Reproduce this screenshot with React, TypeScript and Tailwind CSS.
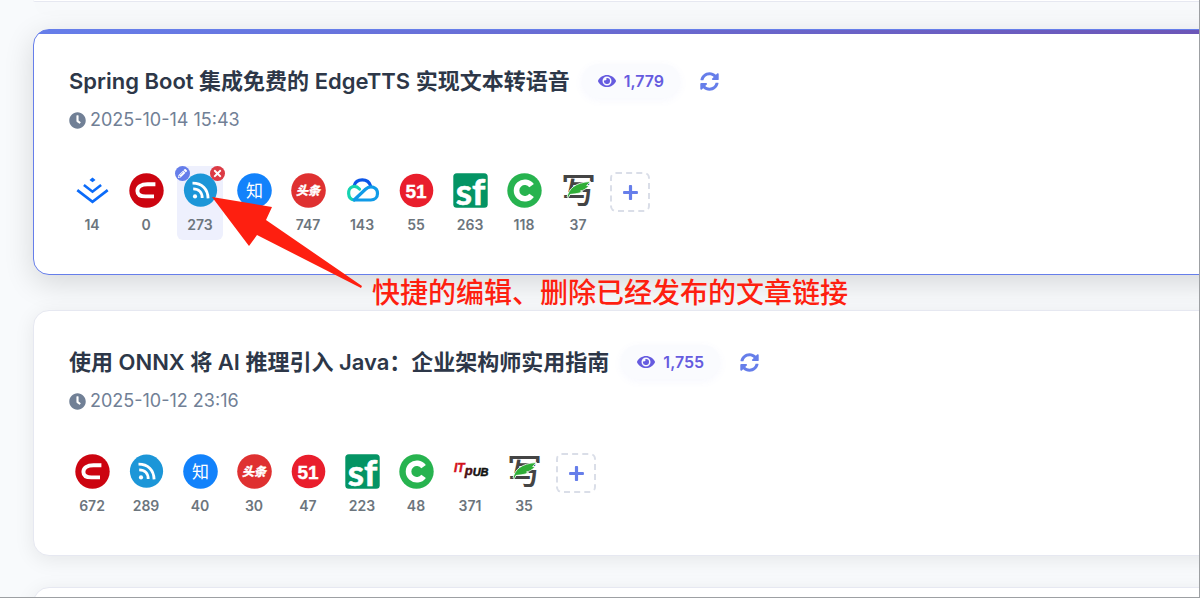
import { FaClock, FaEye, FaPencilAlt, FaPlus, FaSyncAlt, FaTimes } from "react-icons/fa";

type PlatformName =
  | "juejin"
  | "csdn"
  | "cnblogs"
  | "zhihu"
  | "toutiao"
  | "tencent"
  | "cto51"
  | "segmentfault"
  | "oschina"
  | "itpub"
  | "jianshu";

type Channel = { platform: PlatformName; reads: number; active?: boolean };

type Article = {
  title: string;
  date: string;
  total: string;
  channels: Channel[];
  active?: boolean;
};

const articles: Article[] = [
  {
    title: "Spring Boot 集成免费的 EdgeTTS 实现文本转语音",
    date: "2025-10-14 15:43",
    total: "1,779",
    active: true,
    channels: [
      { platform: "juejin", reads: 14 },
      { platform: "csdn", reads: 0 },
      { platform: "cnblogs", reads: 273, active: true },
      { platform: "zhihu", reads: 40 },
      { platform: "toutiao", reads: 747 },
      { platform: "tencent", reads: 143 },
      { platform: "cto51", reads: 55 },
      { platform: "segmentfault", reads: 263 },
      { platform: "oschina", reads: 118 },
      { platform: "jianshu", reads: 37 },
    ],
  },
  {
    title: "使用 ONNX 将 AI 推理引入 Java：企业架构师实用指南",
    date: "2025-10-12 23:16",
    total: "1,755",
    channels: [
      { platform: "csdn", reads: 672 },
      { platform: "cnblogs", reads: 289 },
      { platform: "zhihu", reads: 40 },
      { platform: "toutiao", reads: 30 },
      { platform: "cto51", reads: 47 },
      { platform: "segmentfault", reads: 223 },
      { platform: "oschina", reads: 48 },
      { platform: "itpub", reads: 371 },
      { platform: "jianshu", reads: 35 },
    ],
  },
];

const logos = {
  juejin: (
    <g fill="none" stroke="#0b6bf9" strokeWidth="2.6">
      <path d="M17.5 4.5l3 2.4-3 2.4-3-2.4z" fill="#0b6bf9" stroke="none" />
      <path d="M8.9 11.9l8.6 6.8 8.6-6.8" />
      <path d="M2.3 17.1l15.2 11.8 15.2-11.8" />
    </g>
  ),
  csdn: (
    <>
      <circle cx="17.5" cy="17.5" r="17.2" fill="#cc0410" />
      <path
        d="M26.4 11.2H18.5C12 11.2 8.4 14.2 8.4 18C8.4 21.8 11.500 23.400 16.500 23.400H25"
        fill="none"
        stroke="#fff"
        strokeWidth="3.9"
      />
    </>
  ),
  cnblogs: (
    <>
      <circle cx="17.5" cy="17.2" r="16.6" fill="#1c96d8" />
      <circle cx="12" cy="23.4" r="2.1" fill="#fff" />
      <g fill="none" stroke="#fff" strokeWidth="2.8">
        <path d="M10.2 15.8c5.4 0 9 3.5 9 9.2" />
        <path d="M9.5 10.2c9.5 0 15.3 5.8 15.6 15.2" />
      </g>
    </>
  ),
  zhihu: (
    <>
      <circle cx="17.5" cy="17.5" r="17.3" fill="#1282fb" />
      <text x="17.5" y="24" fontSize="17" fill="#fff" textAnchor="middle">
        知
      </text>
    </>
  ),
  toutiao: (
    <>
      <circle cx="17.5" cy="17.5" r="17.3" fill="#df3131" />
      <text
        x="17"
        y="21.5"
        fontSize="12"
        fontWeight="900"
        fontStyle="italic"
        fill="#fff"
        stroke="#fff"
        strokeWidth="0.3"
        textAnchor="middle"
      >
        头条
      </text>
    </>
  ),
  tencent: (
    <g fill="none" strokeWidth="3.2" strokeLinecap="round">
      <path d="M9.2 12.6C10.2 8.8 13.6 6.9 17.3 6.9c4 0 7.2 2.4 8.3 6" stroke="#0b55e8" />
      <path d="M14.5 16C12.5 13.9 10 13 7.5 13.7c-5.3 1.5-5.5 12.5 1.6 13.3" stroke="#15d3b1" />
      <path
        d="M9.1 27h16.7c3.9 0 6.7-2.8 6.7-6.5 0-6.4-7.2-8.7-12-4.3L9.1 27"
        stroke="#109be8"
        strokeLinejoin="round"
      />
    </g>
  ),
  cto51: (
    <>
      <circle cx="17.5" cy="17.5" r="16.8" fill="#e91e2c" />
      <text
        x="17"
        y="24.5"
        fontSize="19"
        fontWeight="700"
        fill="#fff"
        stroke="#fff"
        strokeWidth="0.4"
        textAnchor="middle"
        className="font-['Liberation_Sans',sans-serif]"
      >
        51
      </text>
    </>
  ),
  segmentfault: (
    <>
      <rect x="0.3" y="0.3" width="34.4" height="34.4" rx="3.5" fill="#049464" />
      <text
        x="17.5"
        y="31.5"
        fontSize="37"
        fontWeight="700"
        fill="#fff"
        stroke="#fff"
        strokeWidth="0.6"
        textAnchor="middle"
        className="font-['Lato',sans-serif]"
      >
        sf
      </text>
    </>
  ),
  oschina: (
    <>
      <circle cx="17.5" cy="17.5" r="17.2" fill="#27b34f" />
      <path d="M24.6 12.7a8.3 8.3 0 1 0 0 9.6" fill="none" stroke="#fff" strokeWidth="5.6" />
    </>
  ),
  itpub: (
    <text
      x="1"
      y="17.5"
      fontSize="12"
      fontWeight="700"
      fontStyle="italic"
      fill="#d4111b"
      stroke="#d4111b"
      strokeWidth="0.5"
      className="font-['Liberation_Sans',sans-serif]"
    >
      IT
      <tspan dy="3" fontSize="13" fill="#4a1014" stroke="#4a1014">
        p
      </tspan>
      <tspan dy="1" fontSize="11" fill="#111" stroke="#111">
        UB
      </tspan>
    </text>
  ),
  jianshu: (
    <>
      <text x="17.5" y="30" fontSize="35" fontWeight="500" fill="#444" textAnchor="middle">
        写
      </text>
      <path
        d="M6 24C8 15.500 14 9.500 29.500 8.500l-3.800 4 2.400.2c-3.200 3.600-6 4.800-8.600 5.300l2 .5c-4 2.700-9.500 2.300-12.500 3L7.500 24.500z"
        fill="#2fae37"
        stroke="#fff"
        strokeWidth="0.8"
      />
    </>
  ),
};

const Logo = ({ name }: { name: PlatformName }) => (
  <svg viewBox="0 0 35 35" className="h-[35px] w-[35px] overflow-visible" aria-hidden="true">
    {logos[name]}
  </svg>
);

const ChannelItem = ({ channel }: { channel: Channel }) => (
  <div className={channel.active ? "relative rounded-md bg-[#eef0fd]" : "relative rounded-md"}>
    <a
      href={`#${channel.platform}`}
      aria-label={channel.platform}
      className="flex w-[46px] flex-col items-center gap-2 pt-[7px] pb-[6px]"
    >
      <Logo name={channel.platform} />
      <span className="text-sm leading-[18px] font-semibold text-[#6c757d]">{channel.reads}</span>
    </a>
    {channel.active && (
      <>
        <button
          aria-label="编辑"
          className="absolute top-0 -left-0.5 flex h-[15px] w-[15px] items-center justify-center rounded-full bg-[#667eea] text-[9px] text-white"
        >
          <FaPencilAlt />
        </button>
        <button
          aria-label="删除"
          className="absolute top-0 -right-0.5 flex h-[15px] w-[15px] items-center justify-center rounded-full bg-[#dc3b45] text-[11px] text-white"
        >
          <FaTimes />
        </button>
      </>
    )}
  </div>
);

const Annotation = () => (
  <div className="pointer-events-none absolute top-[167px] left-[178px] flex items-end text-[#fe1f10]">
    <svg width="152" height="92" viewBox="0 0 152 92" fill="currentColor" aria-hidden="true">
      <path d="M0 0L60 10L54 23L150 89L149 91L45 38L37 49z" />
    </svg>
    <p className="-mb-[22px] ml-2 text-[28px] leading-9 font-medium whitespace-nowrap">
      快捷的编辑、删除已经发布的文章链接
    </p>
  </div>
);

const ArticleCard = ({ article }: { article: Article }) => (
  <article
    className={
      article.active
        ? "relative z-10 -translate-y-1 rounded-2xl border border-[#667eea] bg-white bg-[linear-gradient(90deg,#667eea,#6c55b6)] bg-[length:100%_4px] bg-no-repeat py-[34px] pl-[35px] shadow-[0_8px_30px_rgba(0,0,0,0.14)]"
        : "relative rounded-2xl border border-[#e6e8f1] bg-white py-[34px] pl-[35px] shadow-[0_4px_20px_rgba(0,0,0,0.08)]"
    }
  >
    <div className="flex items-center">
      <h2 className="text-[22px] leading-8 font-semibold whitespace-nowrap text-[#2d3748]">{article.title}</h2>
      <span className="ml-3 flex h-[34px] items-center gap-2 rounded-full bg-[#fafbfe] px-4 text-base font-semibold text-[#665bdf] shadow-[0_2px_8px_rgba(102,126,234,0.06)]">
        <FaEye className="text-lg" />
        {article.total}
      </span>
      <button aria-label="刷新" className="ml-5 text-[19px] text-[#667eea]">
        <FaSyncAlt />
      </button>
    </div>
    <div className="mt-2.5 flex items-center gap-1 text-lg leading-6 text-[#718096]">
      <FaClock className="text-[17px]" />
      <time>{article.date}</time>
    </div>
    <div className="mt-[34px] flex items-start gap-2">
      {article.channels.map((channel) => (
        <ChannelItem key={channel.platform} channel={channel} />
      ))}
      <button
        aria-label="添加链接"
        className="mt-1.5 ml-px flex h-10 w-10 items-center justify-center rounded-md border-2 border-dashed border-[#dadee8] text-[17px] text-[#667eea]"
      >
        <FaPlus />
      </button>
    </div>
    {article.active && <Annotation />}
  </article>
);

export default function App() {
  return (
    <main className="h-screen overflow-hidden border-r border-b border-[#9da0a3] bg-[#f8fafc] font-['Inter','Noto_Sans_CJK_SC',sans-serif]">
      <div className="-mr-9 flex flex-col gap-[31px] pl-[33px]">
        <div className="h-0.5 rounded-b-2xl border-b border-[#e6e8f1] bg-white shadow-[0_4px_20px_rgba(0,0,0,0.08)]" />
        {articles.map((article) => (
          <ArticleCard key={article.title} article={article} />
        ))}
        <div className="h-60 rounded-2xl border border-[#e6e8f1] bg-white shadow-[0_4px_20px_rgba(0,0,0,0.08)]" />
      </div>
    </main>
  );
}
